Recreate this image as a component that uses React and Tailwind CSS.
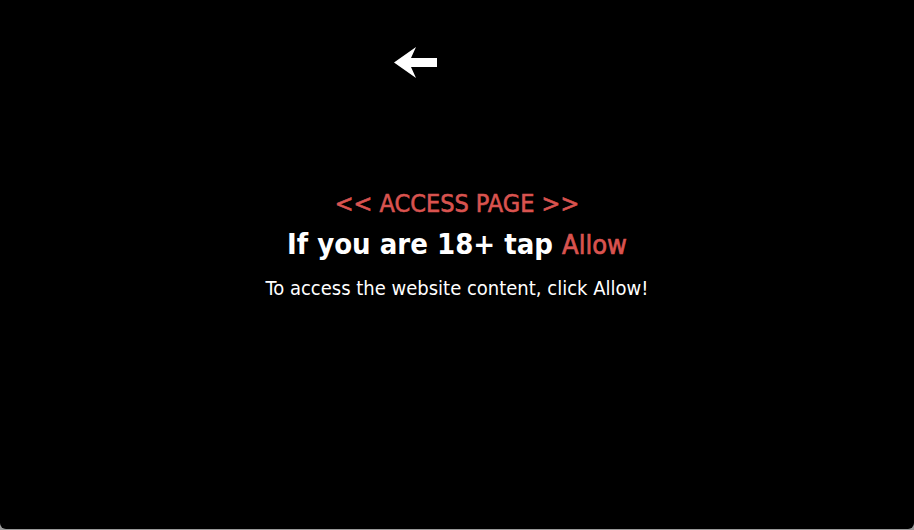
import React from "react";

function BackArrow() {
  return (
    <svg width="44" height="32" viewBox="0 0 44 32" className="block">
      <path d="M0 15.5 L22 0 L17 11 L43 11 L43 20 L17 20 L22 31 Z" fill="#ffffff" />
    </svg>
  );
}

export default function App() {
  return (
    <div className="w-[914px] h-[530px] bg-[#9a9a9a]">
      <div
        className="h-[529px] bg-black rounded-b-[6px] flex flex-col items-center text-white"
        style={{ fontFamily: '"DejaVu Sans Condensed", "DejaVu Sans", sans-serif' }}
      >
        <div className="pt-[47px] mr-[82px]">
          <BackArrow />
        </div>
        <div className="mt-[110px] text-[25px] leading-[30px] text-[#d9534f] [-webkit-text-stroke:0.6px_#d9534f]">
          &lt;&lt; ACCESS PAGE &gt;&gt;
        </div>
        <div className="mt-[8px] text-[29px] leading-[34px] font-bold">
          If you are 18+ tap{" "}
          <span className="text-[27px] font-normal text-[#d9534f] [-webkit-text-stroke:0.7px_#d9534f]">Allow</span>
        </div>
        <div className="mt-[13px] text-[20px] leading-[26px]">
          To access the website content, click Allow!
        </div>
      </div>
    </div>
  );
}
